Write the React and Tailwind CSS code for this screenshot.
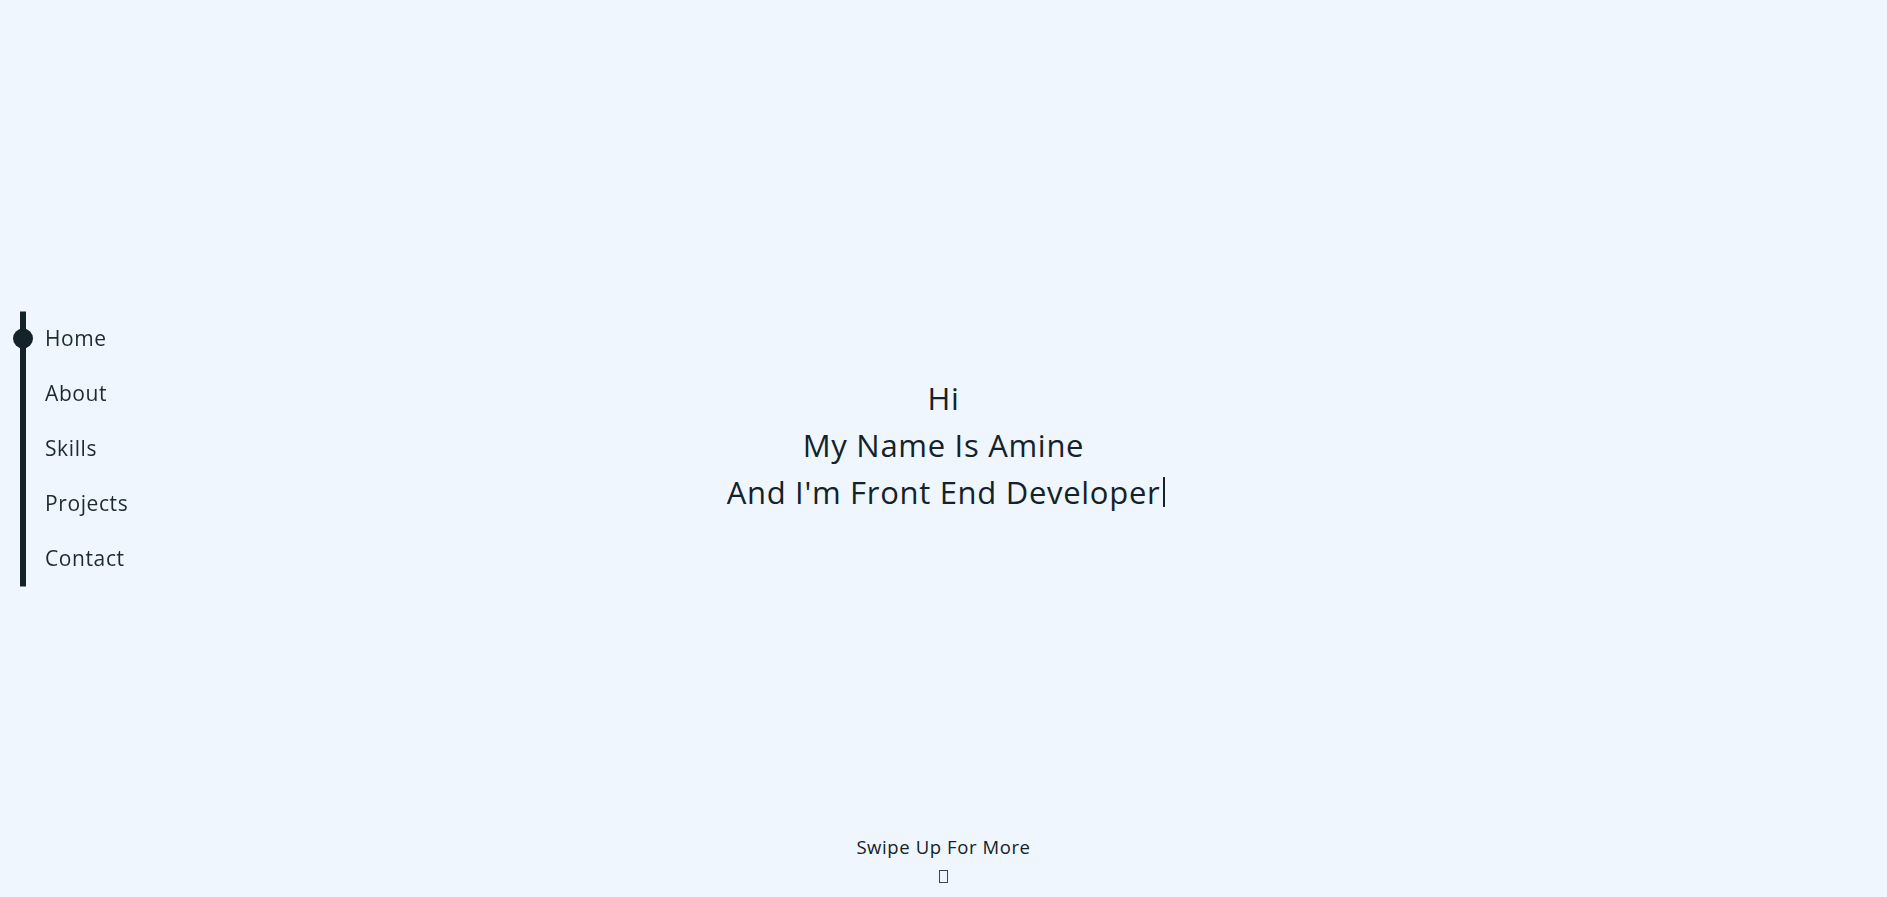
import React from 'react';

const links = ['Home', 'About', 'Skills', 'Projects', 'Contact'];

function SideNav() {
  return (
    <nav className="fixed left-5 top-1/2 -translate-y-1/2">
      <ul className="relative border-l-[6px] border-[#14222a]">
        {links.map((l, i) => (
          <li key={l} className="relative h-[55px] flex items-center pl-[19px]">
            {i === 0 && (
              <span className="absolute left-[-13px] top-1/2 -translate-y-1/2 w-5 h-5 rounded-full bg-[#14222a]" />
            )}
            <a href="#" className="text-[21px] text-[#1c2a33] tracking-[0.6px]">{l}</a>
          </li>
        ))}
      </ul>
    </nav>
  );
}

export default function App() {
  return (
    <div className="h-[897px] w-full bg-[#eff6fd] flex flex-col font-['Open_Sans',sans-serif] text-[#14222a] overflow-hidden">
      <SideNav />
      <main className="flex-1 flex items-center justify-center pt-[56px]">
        <h1 className="text-center text-[31px] leading-[47px] tracking-[0.7px]">
          <div>Hi</div>
          <div>My Name Is Amine</div>
          <div className="relative inline-block">
            And I'm Front End Developer
            <span className="absolute right-[-5px] top-[8px] w-[2px] h-[30px] bg-[#14222a]" />
          </div>
        </h1>
      </main>
      <footer className="flex flex-col items-center pb-[14px]">
        <span className="text-[18.5px] leading-6 tracking-[0.6px]">Swipe Up For More</span>
        <span className="mt-[11px] w-[9px] h-[13px] border border-[#3a4650]" />
      </footer>
    </div>
  );
}
